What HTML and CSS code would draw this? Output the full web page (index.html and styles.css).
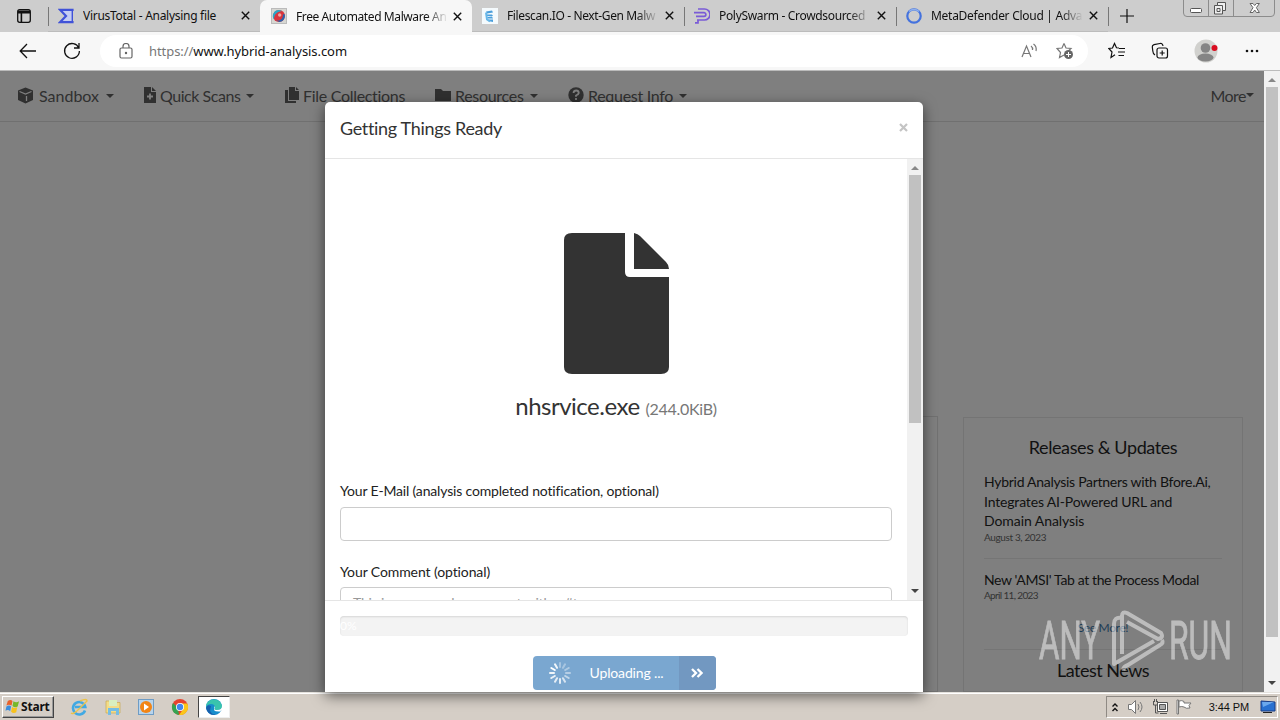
FILE: index.html
```html
<!DOCTYPE html>
<html lang="en">
<head>
  <meta charset="UTF-8" />
  <title>Free Automated Malware Analysis Service - Hybrid Analysis</title>
  <link rel="stylesheet" href="styles.css">
</head>
<body>
  <div class="tabbar">
    <div class="tab-actions">
      <svg width="16" height="16" viewBox="0 0 16 16" fill="none" stroke="#111" stroke-width="1.3"><rect x="1.7" y="1.7" width="12.6" height="12.6" rx="2"/><path d="M2 3.4h12M2 4.6h12M5.4 5v9" stroke-width="1.6"/></svg>
    </div>
    <div class="tab">
      <svg class="favicon" viewBox="0 0 16 16"><path d="M1 1h14v14H1l6-7z" fill="#c5cdf3"/><path d="M14.5 3V1.8H2L8 8l-6 6.2h12.5V13" fill="none" stroke="#4052d8" stroke-width="2.2"/><path d="M14.3 1v14" stroke="#4052d8" stroke-width="1.4"/></svg>
      <span class="tab-title t1">VirusTotal - Analysing file</span>
      <svg class="close" viewBox="0 0 9 9"><path d="M.8.8l7.4 7.4M8.2.8L.8 8.2"/></svg>
    </div>
    <div class="tab active">
      <svg class="favicon" viewBox="0 0 16 16"><rect x=".5" y=".5" width="15" height="15" fill="#d7d7d2" stroke="#bbb"/><circle cx="8" cy="8" r="6" fill="#d9353d"/><path d="M8 2a6 6 0 0 0-5 9.500C3 7 5 4 11 3z" fill="#26a8c9"/><path d="M13.500 6a6 6 0 0 1-5 8L5 12.500c5 .5 7-2 7-6z" fill="#2864b0"/><circle cx="8.700" cy="7" r="1.700" fill="#efa9a0"/></svg>
      <span class="tab-title t2">Free Automated Malware An</span>
      <svg class="close" viewBox="0 0 9 9"><path d="M.8.8l7.4 7.4M8.2.8L.8 8.2"/></svg>
    </div>
    <div class="tab">
      <svg class="favicon" viewBox="0 0 16 16"><path d="M0 0h16v16H0z" fill="#f4fafd"/><path d="M4 3.500l6-1 1 2-6 1zM4 6.500h6l1 1.500H5zM5 9l5-.5 1 2H6zM6 11.500h5V14l-5-1z" fill="#4a9edb"/><path d="M4 4.500l1 7 3 2" fill="none" stroke="#67b7e8" stroke-width="2"/></svg>
      <span class="tab-title t3">Filescan.IO - Next-Gen Malw</span>
      <svg class="close" viewBox="0 0 9 9"><path d="M.8.8l7.4 7.4M8.2.8L.8 8.2"/></svg>
    </div>
    <div class="tab line">
      <svg class="favicon" viewBox="0 0 16 16" fill="none" stroke="#7a5bd6" stroke-width="1.700"><path d="M4 1h6.500a5 5 0 0 1 0 11H3M0 4.700h10a1.800 1.800 0 0 1 0 3.700H2M4 12v2.800H1"/></svg>
      <span class="tab-title t4">PolySwarm - Crowdsourced</span>
      <svg class="close" viewBox="0 0 9 9"><path d="M.8.8l7.4 7.4M8.2.8L.8 8.2"/></svg>
    </div>
    <div class="tab line">
      <svg class="favicon" viewBox="0 0 16 16"><circle cx="8" cy="8" r="6.700" fill="none" stroke="#4472de" stroke-width="2.200"/><path d="M3 3.500a7 7 0 0 1 10 0" fill="none" stroke="#8fb0ec" stroke-width="1.500"/></svg>
      <span class="tab-title t5">MetaDefender Cloud | Adva</span>
      <svg class="close" viewBox="0 0 9 9"><path d="M.8.8l7.4 7.4M8.2.8L.8 8.2"/></svg>
    </div>
    <div class="new-tab">
      <svg width="14" height="14" viewBox="0 0 14 14" stroke="#111" stroke-width="1.200"><path d="M7 0v14M0 7h14"/></svg>
    </div>
    <svg class="window-controls" width="94" height="18" viewBox="0 0 94 18" fill="none" stroke="#8c8c8c">
      <path d="M1.500 0v13q0 3.500 3.500 3.500h84q3.500 0 3.500-3.500V0M26.500 0v16M51.500 0v16" />
      <rect x="8.500" y="8.500" width="11" height="4" rx="1" fill="#fff" stroke="#555"/>
      <path d="M35.500 2.500h8v8h-3v3.500h-8V5.500h3z" fill="#eee" stroke="#555"/><path d="M35.500 5.500h5v5M35 8.500h3v3h-3z" stroke="#555"/>
      <path d="M68 3.500h3l1.700 2 1.700-2h3l-3 4.200 3 4.800h-3l-1.700-2.500-1.700 2.500h-3l3-4.800z" fill="#fff" stroke="#666"/>
    </svg>
  </div>

  <div class="toolbar">
    <svg class="back" width="18" height="16" viewBox="0 0 18 16" fill="none" stroke="#111" stroke-width="1.300"><path d="M17 8H1.500M8 1L1.200 8 8 15"/></svg>
    <svg class="reload" width="18" height="18" viewBox="0 0 18 18" fill="none" stroke="#111" stroke-width="1.300"><path d="M15.800 6A7.400 7.400 0 1 0 16.400 9M16 1v5h-5"/></svg>
    <div class="address">
      <svg width="14" height="16" viewBox="0 0 14 16" fill="none" stroke="#666" stroke-width="1.200"><rect x="1" y="5" width="12" height="10" rx="1.500"/><path d="M4 5V3.500a3 3 0 0 1 6 0V5"/><circle cx="7" cy="10" r=".6" fill="#666"/></svg>
      <span class="url"><span class="scheme">https://</span>www.hybrid-analysis.com</span>
      <svg class="read-aloud" width="17" height="16" viewBox="0 0 17 16" fill="none" stroke="#777" stroke-width="1.200"><path d="M1 14L5.500 3 10 14M2.700 10.500h5.600M10 3q2 1.500 1.500 4M12.500 1q3.500 2.500 2.500 7"/></svg>
      <svg class="add-fav" width="18" height="18" viewBox="0 0 18 18"><path d="M8 1.500l2 4.500 5 .5-3.500 3.200M8 13l-4.500 2.500 1-5L1 6.500 6 6l2-4.500" fill="none" stroke="#777" stroke-width="1.200"/><circle cx="12.500" cy="12.500" r="4.500" fill="#666"/><path d="M12.500 10v5M10 12.500h5" stroke="#fff"/></svg>
    </div>
    <svg class="favs" width="18" height="18" viewBox="0 0 18 18" fill="none" stroke="#111" stroke-width="1.200"><path d="M11 6L8.500 5.800 6.500 1.500 4.500 6 .8 6.500 4 10l-1 5.500 4-2.700M11 6.500h6M10 10h7M10.500 13.500H16"/></svg>
    <svg class="collections" width="18" height="18" viewBox="0 0 18 18" fill="none" stroke="#111" stroke-width="1.200"><rect x="6" y="6" width="10.500" height="10" rx="2"/><path d="M11.200 8.500v5M8.700 11h5M4 13Q2 12 1.800 9L1.300 5Q1 3.200 3 2.600L9 1.500Q11.500 1 12 4"/></svg>
    <svg class="profile" width="24" height="24" viewBox="0 0 24 24"><circle cx="12" cy="12" r="11.500" fill="#d1d1ce"/><circle cx="11.500" cy="9" r="4.800" fill="#858585"/><ellipse cx="11.500" cy="18.500" rx="8" ry="4" fill="#858585"/><circle cx="20.500" cy="9" r="3" fill="#d90d20"/></svg>
    <svg class="more-menu" width="14" height="4" viewBox="0 0 14 4" fill="#111"><circle cx="2" cy="2" r="1.300"/><circle cx="7" cy="2" r="1.300"/><circle cx="12" cy="2" r="1.300"/></svg>
  </div>

  <div class="viewport">
    <div class="page">
      <nav class="navbar">
        <a class="nav-sandbox"><svg width="17" height="17" viewBox="0 0 17 17"><path d="M8.500.5l7.500 3v9.500L8.500 16.500 1 13V3.500z" fill="#303030"/><path d="M2.500 4.500l6 2.500 6-2.500M9.500 9v5" fill="none" stroke="#7f7f7f" stroke-width="1.300"/></svg><span>Sandbox</span><i class="caret"></i></a>
        <a class="nav-quick"><svg width="12" height="16" viewBox="0 0 12 16"><path d="M0 0h7v5h5v11H0zM8 0l4 4H8z" fill="#303030"/><path d="M6 6.500v6M3 9.500h6" stroke="#7f7f7f" stroke-width="1.800"/></svg><span>Quick Scans</span><i class="caret"></i></a>
        <a class="nav-files"><svg width="14" height="16" viewBox="0 0 14 16" fill="#303030"><path d="M4 0h6v4h4v9H4zM11 0l3 3h-3zM0 3h3v11h8v2H0z"/></svg><span>File Collections</span></a>
        <a class="nav-resources"><svg width="16" height="14" viewBox="0 0 16 14" fill="#303030"><path d="M0 1h6l2 2h8v10H0z"/></svg><span>Resources</span><i class="caret"></i></a>
        <a class="nav-request"><svg width="16" height="16" viewBox="0 0 16 16"><circle cx="8" cy="8" r="7.700" fill="#303030"/><path d="M5.500 6q.3-2.500 2.700-2.500T10.800 6Q10.500 7.500 8 8.500v1.200M8 11v2" fill="none" stroke="#7f7f7f" stroke-width="1.800"/></svg><span>Request Info</span><i class="caret"></i></a>
        <a class="nav-more"><span>More</span><i class="caret"></i></a>
      </nav>
      <div class="content">
        <div class="main-panel"></div>
        <aside class="sidebar">
          <h3 class="releases">Releases &amp; Updates</h3>
          <article>
            <p><span class="n1">Hybrid Analysis Partners with Bfore.Ai,</span><br><span class="n2">Integrates AI-Powered URL and</span><br><span class="n3">Domain Analysis</span></p>
            <time class="d1">August 3, 2023</time>
          </article>
          <article>
            <p><span class="n4">New 'AMSI' Tab at the Process Modal</span></p>
            <time class="d2">April 11, 2023</time>
          </article>
          <a class="see-more">See More!</a>
          <h3 class="latest">Latest News</h3>
        </aside>
      </div>

      <div class="modal">
        <div class="modal-header">
          <h4>Getting Things Ready</h4>
          <svg class="dismiss" width="9" height="9" viewBox="0 0 9 9" stroke="#c4c4c4" stroke-width="2.200"><path d="M1 1l7 7M8 1L1 8"/></svg>
        </div>
        <div class="modal-scroll">
          <div class="modal-body">
            <svg class="file-icon" width="105" height="141" viewBox="0 0 105 141" fill="#333"><path d="M8 0h53v39q0 5 5 5h39v90q0 7-8 7H8q-8 0-8-7V7q0-7 8-7zM70 0q4 1 6 3l26 26q3 3 3 7H70z"/></svg>
            <div class="file-name"><span class="name">nhsrvice.exe</span><small>(244.0KiB)</small></div>
            <label class="email-label">Your E-Mail (analysis completed notification, optional)</label>
            <div class="field"></div>
            <label class="comment-label">Your Comment (optional)</label>
            <div class="field"><span>This is an example comment with a #tag</span></div>
          </div>
          <div class="scrollbar inner"><i class="up"></i><div class="thumb"></div><i class="down"></i></div>
        </div>
        <div class="modal-footer">
          <div class="progress">0%</div>
          <div class="upload">
            <svg class="spinner" width="22" height="22" viewBox="-11 -11 22 22" stroke="#fff" stroke-width="2" stroke-linecap="round">
              <path d="M0-6v-4" opacity=".35"/><path d="M3-5.200l2-3.500" opacity=".35"/><path d="M5.200-3l3.500-2" opacity=".4"/><path d="M6 0h4" opacity=".45"/><path d="M5.200 3l3.500 2" opacity=".55"/><path d="M3 5.200l2 3.500" opacity=".7"/><path d="M0 6v4" opacity=".8"/><path d="M-3 5.200l-2 3.500" opacity=".8"/><path d="M-5.200 3l-3.500 2" opacity=".85"/><path d="M-6 0h-4" opacity=".9"/><path d="M-5.200-3l-3.500-2"/><path d="M-3-5.200l-2-3.500" opacity=".9"/>
            </svg>
            <span class="upload-text">Uploading ...</span>
            <span class="next"><svg width="12" height="10" viewBox="0 0 12 10" fill="none" stroke="#fff" stroke-width="2.300"><path d="M1 1l4 4-4 4M6.500 1l4 4-4 4"/></svg></span>
          </div>
        </div>
      </div>
    </div>
    <div class="scrollbar outer"><i class="up"></i><div class="thumb"></div><i class="down"></i></div>
    <svg class="watermark" width="196" height="64" viewBox="0 0 196 64">
      <text x="3" y="50" textLength="61" lengthAdjust="spacingAndGlyphs">ANY</text>
      <text x="133" y="50" textLength="63" lengthAdjust="spacingAndGlyphs">RUN</text>
      <path d="M85 9q-7-1-7 6v40l40-23M86 45V7q0-5 5-3l34 20q3 5-3 6L91 13M126 31q2 3-2 5L92 56q-4 1-5 5"/>
    </svg>
  </div>

  <div class="taskbar">
    <div class="start">
      <svg width="15" height="15" viewBox="0 0 16 16"><path d="M3 2q3-2 5 0L7 7Q4 5 1.500 7z" fill="#e8622c"/><path d="M9 2.500q3 2 6 0L13.500 8q-3 2-5.500-.5z" fill="#76b82a"/><path d="M1.500 8q3-2 5 0L5.500 13q-2-2-5-.5z" fill="#3b8ede"/><path d="M7.500 8.500q3 2 5.500 0L12 14q-3 2-5.500-.5z" fill="#f8c21c"/></svg>
      <b>Start</b>
    </div>
    <div class="launch">
      <svg class="ie" width="18" height="18" viewBox="0 0 18 18" fill="none"><path d="M15 12.500A6.200 6.200 0 1 1 15.300 9H5" stroke="#42a9e3" stroke-width="2.600"/><path d="M1 15Q3 17 9 11T17 3q0-3-7 0" stroke="#ecc348" stroke-width="1.400"/></svg>
      <svg width="18" height="18" viewBox="0 0 18 18"><path d="M2 3h5l1 1.500h8V15H2z" fill="#f3dc88" stroke="#c8a951" stroke-width=".7"/><path d="M5 2h8v6H5z" fill="#d9efc0"/><path d="M4 10h11v7h-3v-4H7v4H4z" fill="#75bde4"/></svg>
      <svg width="18" height="18" viewBox="0 0 18 18"><rect x="1.500" y="1.500" width="15" height="15" fill="#b8d4ec" stroke="#6e9cc5"/><circle cx="9" cy="9" r="6" fill="#f28516"/><path d="M7 5.500l5 3.500-5 3.500z" fill="#fff"/></svg>
      <svg width="18" height="18" viewBox="0 0 18 18"><circle cx="9" cy="9" r="8" fill="#e6432f"/><path d="M2 5l5 5 1 7A8 8 0 0 1 2 5z" fill="#34a351"/><path d="M9 5.500h7.200A8 8 0 0 1 8 17l4.300-6z" fill="#fbc619"/><circle cx="9" cy="9" r="4" fill="#fff"/><circle cx="9" cy="9" r="3.200" fill="#4286ef"/></svg>
      <div class="task-active"><svg width="18" height="18" viewBox="0 0 18 18"><circle cx="9" cy="9" r="8" fill="#168dcc"/><path d="M1.300 7C3 0 15-1 17 8q0 4-5 4c-3 0-3-1-2-2.500Q10 6 6 6 2.500 6 1.300 9z" fill="#39c4ad"/><path d="M6 8q-3 8 5 8.700Q3 18 1 10q1-4 5-2z" fill="#1760ad"/><path d="M10 8q-4 6 5 5.500l1.500-1.500Q18 12 17 8q0 4-5 4c-3 0-3-1-2-2.500z" fill="#fff"/></svg></div>
    </div>
    <div class="tray">
      <svg width="8" height="11" viewBox="0 0 8 11" fill="none" stroke="#111" stroke-width="1.400"><path d="M1.500 4.500L4 2l2.500 2.500M1.500 9L4 6.500 6.500 9"/></svg>
      <svg class="speaker" width="16" height="16" viewBox="0 0 16 16" fill="#fff" stroke="#777"><path d="M.5 5.500h3l4-4v13l-4-4h-3z"/><path d="M10 5q2 3 0 6M12 3q4 5 0 10" fill="none"/></svg>
      <svg class="network" width="17" height="16" viewBox="0 0 17 16" fill="#fff" stroke="#555"><path d="M5.500 3.500h10v9h-10z"/><path d="M7.500 5.500h6v5h-6z" fill="#aaa"/><path d="M8 14.500h7M1.500 2v4h4V2M2.500 0v3M4.500 0v3M3.500 6v8h3" fill="none"/></svg>
      <svg class="flag" width="16" height="16" viewBox="0 0 16 16" fill="#fff" stroke="#777"><path d="M1 1h1.500v14H1z"/><path d="M3 2q3-1 5 .500V4h7l-2 2.500L14 9q-4 1-6-1-2-1-5 0z"/></svg>
      <span class="clock">3:44 PM</span>
      <svg width="16" height="14" viewBox="0 0 16 14"><path d="M1 1l14 1v9H1z" fill="#2870d0" stroke="#1a3c85"/><path d="M2 2h12L3 7z" fill="#6ba8ed"/><path d="M3 12.500h9" stroke="#222"/></svg>
    </div>
  </div>
</body>
</html>
```

FILE: styles.css
```css
* {
  box-sizing: border-box;
  margin: 0;
  padding: 0;
}
body {
  width: 1280px;
  height: 720px;
  overflow: hidden;
  display: flex;
  flex-direction: column;
  font-family: "Noto Sans", sans-serif;
  font-size: 12px;
  color: #111;
}
svg {
  display: block;
  flex: none;
}
span, time, label, h3, h4 {
  white-space: nowrap;
}

/* browser tabs */
.tabbar {
  height: 32px;
  flex: none;
  display: flex;
  background: #cdcdcd;
}
.tab-actions {
  width: 48px;
  padding: 8px 16px;
}
.tab {
  width: 212px;
  height: 32px;
  display: flex;
  align-items: center;
  padding: 0 10px;
  border-bottom: 1px solid #bcbcbc;
}
.tab:nth-child(2), .line, .new-tab {
  background: linear-gradient(#777, #777) 0 7px / 1px 19px no-repeat;
}
.tab.active {
  background: #f7f7f7;
  border-radius: 7px 7px 0 0;
  border-bottom: 0;
  padding-left: 11px;
}
.favicon {
  width: 16px;
  height: 16px;
}
.tab-title {
  width: 152px;
  margin: 0 7px 0 9px;
  overflow: hidden;
  letter-spacing: -0.28px;
}
.close {
  width: 9px;
  height: 9px;
  margin-left: auto;
  stroke: #111;
  stroke-width: 1.4;
}
.t2, .t3, .t4, .t5 {
  -webkit-mask-image: linear-gradient(90deg, #000 130px, transparent 152px);
}
.t2 { letter-spacing: -0.4px; }
.t3 { letter-spacing: -0.37px; }
.t4 { letter-spacing: -0.33px; }
.new-tab {
  padding: 9px 12px;
  width: 75px;
}
.window-controls {
  margin-left: -1px;
}

/* address bar */
.toolbar {
  height: 39px;
  flex: none;
  display: flex;
  align-items: center;
  background: #f7f7f7;
  border-bottom: 1px solid #bbb;
}
.back { margin-left: 19px; }
.reload { margin-left: 26px; }
.address {
  width: 988px;
  height: 32px;
  margin-left: 19px;
  padding: 0 14px 0 19px;
  display: flex;
  align-items: center;
  background: #fff;
  border-radius: 16px;
}
.url {
  margin-left: 16px;
  font-size: 13px;
  letter-spacing: -0.07px;
}
.scheme { color: #777; }
.read-aloud { margin-left: auto; }
.add-fav { margin-left: 18px; }
.favs { margin-left: 20px; }
.collections { margin-left: 25px; }
.profile { margin-left: 25px; }
.more-menu { margin-left: 27px; }

/* page */
.viewport {
  position: relative;
  height: 621px;
  flex: none;
  display: flex;
}
.page {
  width: 1264px;
  height: 621px;
  overflow: hidden;
  background: #7f7f7f;
  font-family: Lato, sans-serif;
}
.navbar {
  height: 51px;
  display: flex;
  align-items: center;
  padding: 0 10px 2px 17px;
  border-bottom: 1px solid #707070;
  font-size: 16px;
  letter-spacing: -0.3px;
  color: #303030;
}
.navbar a {
  display: flex;
  align-items: center;
}
.caret {
  border: 4px solid transparent;
  border-top-color: #303030;
  border-bottom: 0;
}
.nav-sandbox { width: 127px; gap: 5px; }
.nav-quick { width: 141px; gap: 4px; }
.nav-files { width: 150px; gap: 4px; }
.nav-resources { width: 133px; gap: 4px; }
.nav-request { gap: 4px; }
.nav-more { margin-left: auto; letter-spacing: -0.5px; }
.nav-quick { letter-spacing: -0.45px; }
.nav-sandbox .caret, .nav-quick .caret, .nav-resources .caret, .nav-request .caret { margin: 2px 0 0 2px; }
.nav-sandbox { letter-spacing: 0; }
.content {
  height: 570px;
  display: flex;
  justify-content: flex-end;
  gap: 25px;
  padding: 294px 21px 0 0;
}
.main-panel {
  width: 600px;
  border: 1px solid #717171;
}
.sidebar {
  width: 280px;
  margin-top: 1px;
  padding: 18px 20px;
  border: 1px solid #747474;
  font-size: 14px;
}
.sidebar h3 {
  font-size: 18px;
  font-weight: 400;
  text-align: center;
  line-height: 22px;
  letter-spacing: -0.4px;
}
.sidebar article {
  border-bottom: 1px solid #757575;
  margin-bottom: 11px;
}
.sidebar .releases { margin-bottom: 14px; }
.sidebar article p { line-height: 19.6px; }
.n1 { letter-spacing: -0.28px; }
.n2 { letter-spacing: -0.17px; }
.n3 { letter-spacing: -0.07px; }
.n4 { letter-spacing: -0.37px; }
.sidebar time {
  display: block;
  height: 16px;
  line-height: 13px;
  font-size: 10px;
  letter-spacing: -0.37px;
  color: #333;
}
.sidebar .d2 { letter-spacing: -0.65px; }
.sidebar article:nth-of-type(1) time { height: 27px; }
.sidebar article:nth-of-type(2) { border: 0; }
.see-more {
  display: block;
  height: 34px;
  padding-top: 4px;
  text-align: center;
  font-size: 12px;
  letter-spacing: -0.35px;
  color: #1c3c56;
  border-bottom: 1px solid #757575;
}
.sidebar .latest { margin-top: 9px; letter-spacing: -0.5px; }

/* upload dialog */
.modal {
  position: absolute;
  left: 325px;
  top: 31px;
  width: 598px;
  height: 590px;
  background: #fff;
  border-radius: 5px 5px 0 0;
  box-shadow: 0 4px 14px rgba(0, 0, 0, 0.55);
  color: #333;
}
.modal-header {
  height: 57px;
  padding: 0 15px;
  display: flex;
  justify-content: space-between;
  border-bottom: 1px solid #e5e5e5;
}
.modal-header h4 {
  font-size: 18px;
  font-weight: 400;
  line-height: 52px;
  letter-spacing: -0.32px;
}
.dismiss { margin-top: 21px; }
.modal-scroll {
  height: 441px;
  display: flex;
  overflow: hidden;
}
.modal-body {
  width: 582px;
  padding: 74px 15px 0;
}
.file-icon { margin: 0 auto 0 224px; }
.file-name {
  display: flex;
  align-items: baseline;
  justify-content: center;
  gap: 6px;
  height: 32px;
  margin-top: 16px;
}
.name { font-size: 24px; line-height: 32px; letter-spacing: -0.5px; }
.file-name small { font-size: 16px; letter-spacing: -0.3px; color: #777; }
.modal-body label {
  display: block;
  font-size: 14px;
  line-height: 20px;
  color: #222;
}
.modal-body .email-label { margin-top: 59px; letter-spacing: -0.17px; }
.modal-body .comment-label { margin-top: 21px; letter-spacing: -0.1px; }
.field {
  height: 34px;
  margin-top: 6px;
  padding: 5px 12px;
  border: 1px solid #ccc;
  border-radius: 4px;
  font-size: 14px;
  line-height: 20px;
  letter-spacing: -0.17px;
  color: #999;
}
.comment-label + .field { margin-top: 5px; }
.modal-footer {
  border-top: 1px solid #e5e5e5;
  padding: 15px 15px 0;
}
.progress {
  height: 20px;
  background: #f3f3f3;
  border-radius: 4px;
  box-shadow: inset 0 1px 2px rgba(0, 0, 0, 0.12);
  font-size: 12px;
  line-height: 20px;
  color: #fff;
}
.upload {
  width: 183px;
  height: 34px;
  margin: 20px auto 0;
  display: flex;
  align-items: center;
  background: #7aa7d0;
  border-radius: 4px;
  overflow: hidden;
  color: #fff;
}
.spinner { margin-left: 16px; }
.upload-text {
  width: 89px;
  margin-left: 19px;
  padding-bottom: 2px;
  font-size: 14px;
  letter-spacing: -0.15px;
}
.next {
  width: 37px;
  height: 34px;
  padding: 12px;
  background: #7298c1;
}

/* scrollbars */
.scrollbar {
  width: 16px;
  background: #f1f1f1;
  display: flex;
  flex-direction: column;
  align-items: center;
}
.scrollbar .thumb {
  width: 12px;
  background: #c1c1c1;
}
.up, .down {
  border: 4px solid transparent;
}
.up { border-bottom-color: #888; border-top: 0; }
.down { border-top-color: #444; border-bottom: 0; margin-top: auto; }
.inner { height: 441px; padding: 7px 0; }
.inner .thumb { height: 248px; margin-top: 5px; }
.outer { height: 621px; padding: 7px 0; }
.outer .thumb { height: 550px; margin-top: 5px; }

.watermark {
  position: absolute;
  left: 1036px;
  top: 538px;
  opacity: 0.48;
}
.watermark text {
  font-family: Roboto, sans-serif;
  font-size: 53px;
  fill: #fff;
  stroke: #fff;
  stroke-width: 0.8;
}
.watermark path {
  fill: none;
  stroke: #fff;
  stroke-width: 4;
  stroke-linejoin: round;
}

/* taskbar */
.taskbar {
  height: 28px;
  flex: none;
  display: flex;
  align-items: center;
  background: #d5cec6;
  border-top: 1px solid #e5e2dd;
  box-shadow: inset 0 1px #fff;
}
.start {
  width: 52px;
  height: 22px;
  margin-left: 2px;
  padding-left: 2px;
  display: flex;
  align-items: center;
  border: 1px solid;
  border-color: #fff #444 #444 #fff;
  box-shadow: inset -1px -1px #999;
}
.start b {
  font-size: 12px;
  margin-left: 1px;
  letter-spacing: -0.2px;
}
.launch {
  display: flex;
  align-items: center;
  gap: 15.6px;
  margin-left: 16px;
}
.task-active {
  width: 32px;
  height: 22px;
  margin-left: -6px;
  padding: 1px 6px;
  background: #fff;
  border: 1px solid;
  border-color: #444 #eee #eee #444;
}
.tray {
  width: 172px;
  height: 22px;
  margin: 1px 2px 0 auto;
  display: flex;
  align-items: center;
  padding: 0 1px 0 4px;
  border: 1px solid;
  border-color: #8f8a84 #fff #fff #8f8a84;
}
.speaker { margin-left: 9px; }
.network { margin-left: 8px; }
.flag { margin-left: 7px; }
.clock {
  margin: 0 11px 0 auto;
  font-family: "Liberation Sans", sans-serif;
  font-size: 11px;
  letter-spacing: -0.1px;
}
```
